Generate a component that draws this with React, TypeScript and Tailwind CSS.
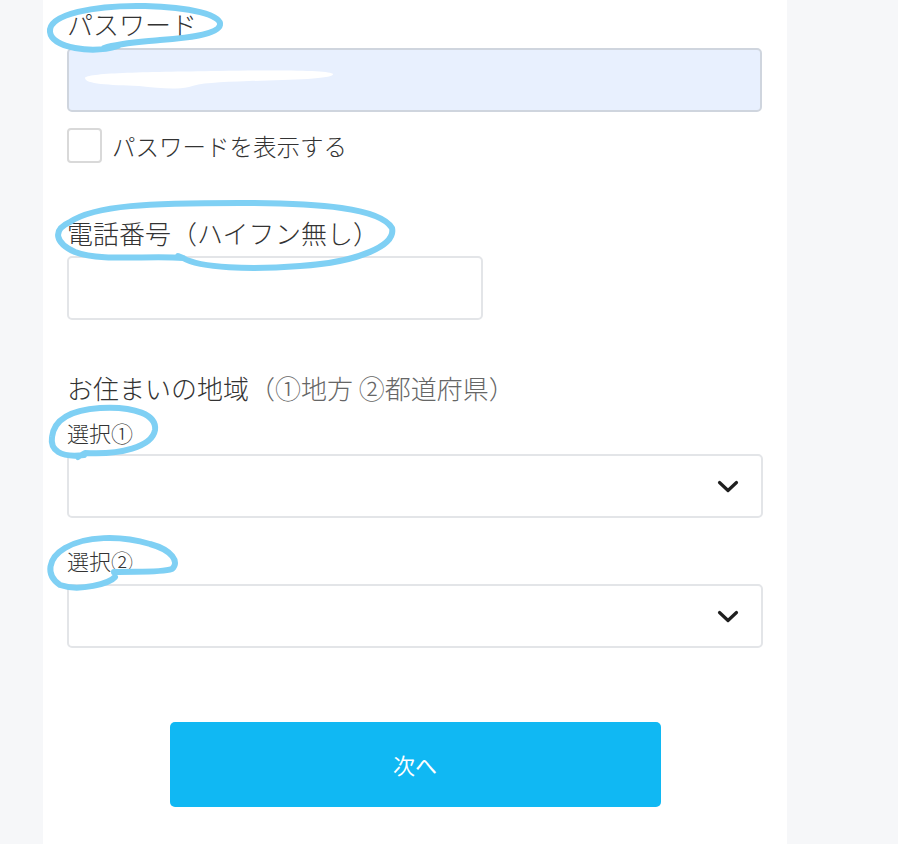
import React from 'react';

const font = { fontFamily: '"Noto Sans CJK JP", "Noto Sans", sans-serif' };

function Chevron() {
  return (
    <svg width="22" height="13" viewBox="0 0 22 13" className="shrink-0">
      <path d="M2.5 2.5 L11 10.5 L19.5 2.5" fill="none" stroke="#1f1f1f" strokeWidth="3.2" strokeLinecap="round" strokeLinejoin="round" />
    </svg>
  );
}

function SelectBox() {
  return (
    <div className="flex h-[64px] w-full items-center justify-end rounded-[5px] border-2 border-[#e3e5e8] bg-white pr-[22px]">
      <Chevron />
    </div>
  );
}

// hand-drawn marker loops that sit over the labels
function Scribbles() {
  const s = { fill: 'none', stroke: '#7fd0f4', strokeWidth: 6, strokeLinecap: 'round' as const, strokeLinejoin: 'round' as const };
  return (
    <svg className="pointer-events-none absolute left-0 top-0" width="898" height="844" viewBox="0 0 898 844">
      <path
        {...s}
        d="M118 46 C92 54 52 48 50 32 C48 14 95 5 145 6 C190 7 222 15 220 25 C218 35 185 38 160 40 C140 42 120 43 104 48"
      />
      <path
        {...s}
        d="M183 258 C150 255 100 262 75 252 C55 243 52 230 70 222 C95 205 150 203 240 203 C320 203 380 208 392 228 C396 245 360 262 300 266 C250 270 200 268 183 258 L178 256"
      />
      <path
        {...s}
        d="M84 455 C60 458 50 450 52 437 C54 420 70 410 100 408 C135 406 157 415 155 430 C152 447 120 455 85 453 L78 457"
      />
      <path
        {...s}
        d="M114 572 C135 571 160 573 172 569 C180 562 172 550 150 544 C120 535 85 536 65 548 C48 558 45 575 60 585 C80 592 110 583 115 577"
      />
    </svg>
  );
}

export default function App() {
  return (
    <div className="relative h-[844px] w-[898px] overflow-hidden bg-[#f6f7f9] font-light text-[#333]" style={font}>
      <div className="ml-[43px] flex h-full w-[744px] flex-col bg-white px-[24px] pt-[9px]">
        <p className="text-[26px] leading-[30px]">パスワード</p>
        <div className="mt-[9px] flex h-[64px] w-[695px] items-center rounded-[5px] border-2 border-[#cfd5de] bg-[#e8f0fe] px-[10px]">
          <svg width="260" height="28" viewBox="0 0 260 28">
            <path
              d="M6 12 C8 7 60 6 140 5 C200 4 252 4 254 8 C256 13 210 14 170 15 C140 16 120 17 110 21 C95 24 80 22 60 20 C30 19 6 18 6 12 Z"
              fill="#ffffff"
            />
          </svg>
        </div>
        <div className="mt-[16px] flex items-center gap-[10px]">
          <div className="h-[35px] w-[35px] rounded-[4px] border-2 border-[#d9d9d9] bg-white" />
          <span className="text-[23.5px] leading-[30px]">パスワードを表示する</span>
        </div>

        <p className="mt-[55px] text-[26px] leading-[30px]">電話番号（ハイフン無し）</p>
        <div className="mt-[8px] h-[64px] w-[416px] rounded-[5px] border-2 border-[#e3e5e8] bg-white" />

        <p className="mt-[53px] text-[26px] leading-[30px]">
          お住まいの地域<span className="text-[#666]">（①地方 ②都道府県）</span>
        </p>
        <p className="mt-[14px] text-[22px] leading-[30px]">選択①</p>
        <div className="mt-[7px]">
          <SelectBox />
        </div>

        <p className="mt-[27px] text-[22px] leading-[30px]">選択②</p>
        <div className="mt-[9px]">
          <SelectBox />
        </div>

        <div className="mt-[74px] flex justify-center">
          <button className="h-[85px] w-[491px] rounded-[5px] bg-[#10b8f3] text-[22px] font-normal text-white">次へ</button>
        </div>
      </div>
      <Scribbles />
    </div>
  );
}
